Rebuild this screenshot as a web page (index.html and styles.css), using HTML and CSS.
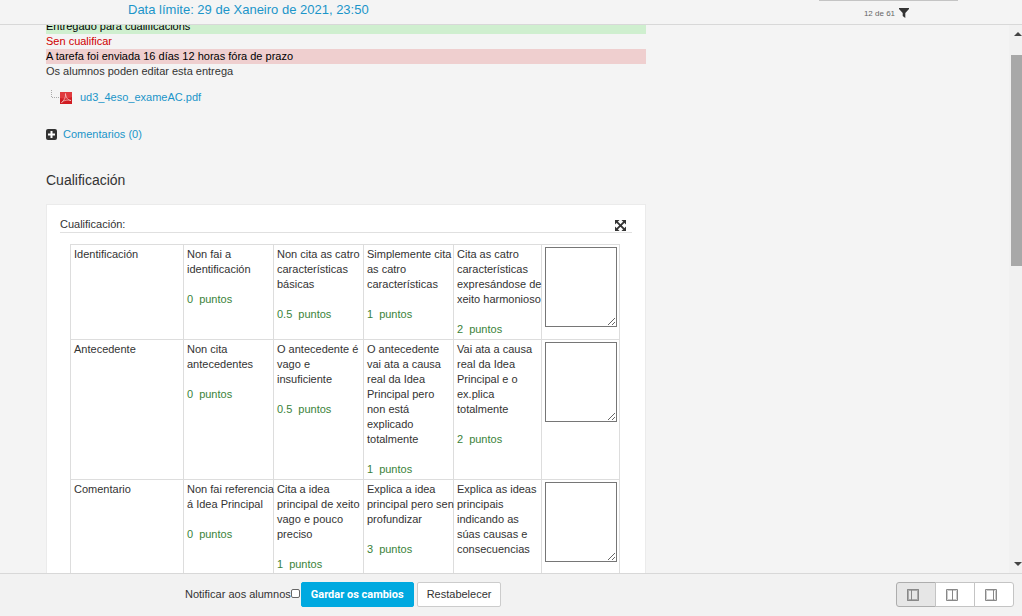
FILE: index.html
```html
<!DOCTYPE html>
<html lang="gl">
<head>
<meta charset="utf-8">
<title>Cualificación</title>
<link rel="stylesheet" href="styles.css">
</head>
<body>
<header class="topbar">
  <a class="due" href="#">Data límite: 29 de Xaneiro de 2021, 23:50</a>
  <div class="user-picker">
    <div class="picker-edge"></div>
    <div class="picker-count">
      <span>12 de 61</span>
      <svg class="filter-icon" viewBox="0 0 10 10"><path d="M0 0h10v1L6.300 5v5L3.700 8V5L0 1z" fill="#333"/></svg>
    </div>
  </div>
</header>
<div class="workspace">
  <main class="panel">
    <div class="content">
      <div class="status submitted">Entregado para cualificacións</div>
      <div class="status ungraded">Sen cualificar</div>
      <div class="status late">A tarefa foi enviada 16 días 12 horas fóra de prazo</div>
      <div class="status">Os alumnos poden editar esta entrega</div>
      <div class="file">
        <svg class="tree-line" viewBox="0 0 9 9"><path d="M.5 0v7.500H9" fill="none" stroke="#aaa" stroke-dasharray="1 1"/></svg>
        <svg class="pdf-icon" viewBox="0 0 12 12"><path d="M0 0h12v12H0z" fill="#d01c22"/><path d="M0 0h12v5Q6 8 0 6z" fill="#e03a3e"/><path d="M1.500 10.500C4 9 6 5 5.500 1.500C5.500 5 8 8.500 11 8.500C8 7.500 4 8 1.500 10.500z" fill="none" stroke="#f6c8c8" stroke-width=".7"/></svg>
        <a href="#">ud3_4eso_exameAC.pdf</a>
      </div>
      <div class="comments">
        <svg class="plus-icon" viewBox="0 0 11 11"><rect width="11" height="11" rx="2" fill="#333"/><path d="M5.500 2v7M2 5.500h7" stroke="#fff" stroke-width="2"/></svg>
        <a href="#">Comentarios (0)</a>
      </div>
      <h3 class="heading">Cualificación</h3>
      <section class="card">
        <div class="card-head">
          <span>Cualificación:</span>
          <button class="expand" type="button" aria-label="Expandir">
            <svg viewBox="0 0 12 12"><path d="M2 2l8 8M10 2l-8 8" stroke="#333" stroke-width="2"/><path d="M0 0h5L0 5zM12 0v5L7 0zM0 12V7l5 5zM12 12H7l5-5z" fill="#333"/></svg>
          </button>
        </div>
        <table class="rubric">
          <colgroup><col class="col-name"><col class="col-level"><col class="col-level"><col class="col-level"><col class="col-top"><col class="col-remark"></colgroup>
          <tbody>
            <tr>
              <th scope="row">Identificación</th>
              <td>Non fai a<br>identificación<div class="score"><span>0</span><span>puntos</span></div></td>
              <td>Non cita as catro<br>características<br>básicas<div class="score"><span>0.5</span><span>puntos</span></div></td>
              <td>Simplemente cita<br>as catro<br>características<div class="score"><span>1</span><span>puntos</span></div></td>
              <td>Cita as catro<br>características<br>expresándose de<br>xeito harmonioso<div class="score"><span>2</span><span>puntos</span></div></td>
              <td><textarea class="remark" aria-label="Identificación"></textarea></td>
            </tr>
            <tr>
              <th scope="row">Antecedente</th>
              <td>Non cita<br>antecedentes<div class="score"><span>0</span><span>puntos</span></div></td>
              <td>O antecedente é<br>vago e<br>insuficiente<div class="score"><span>0.5</span><span>puntos</span></div></td>
              <td>O antecedente<br>vai ata a causa<br>real da Idea<br>Principal pero<br>non está<br>explicado<br>totalmente<div class="score"><span>1</span><span>puntos</span></div></td>
              <td>Vai ata a causa<br>real da Idea<br>Principal e o<br>ex.plica<br>totalmente<div class="score"><span>2</span><span>puntos</span></div></td>
              <td><textarea class="remark" aria-label="Antecedente"></textarea></td>
            </tr>
            <tr class="tall">
              <th scope="row">Comentario</th>
              <td>Non fai referencia<br>á Idea Principal<div class="score"><span>0</span><span>puntos</span></div></td>
              <td>Cita a idea<br>principal de xeito<br>vago e pouco<br>preciso<div class="score"><span>1</span><span>puntos</span></div></td>
              <td>Explica a idea<br>principal pero sen<br>profundizar<div class="score"><span>3</span><span>puntos</span></div></td>
              <td>Explica as ideas<br>principais<br>indicando as<br>súas causas e<br>consecuencias</td>
              <td><textarea class="remark" aria-label="Comentario"></textarea></td>
            </tr>
          </tbody>
        </table>
      </section>
    </div>
  </main>
  <div class="scrollbar">
    <svg class="arrow" viewBox="0 0 8 4"><path d="M0 4l4-4 4 4z" fill="#444"/></svg>
    <div class="thumb"></div>
    <svg class="arrow" viewBox="0 0 8 4"><path d="M0 0h8L4 4z" fill="#444"/></svg>
  </div>
</div>
<footer class="actions">
  <form class="save">
    <label for="notify">Notificar aos alumnos</label>
    <input class="check" type="checkbox" id="notify">
    <button class="btn primary" type="button">Gardar os cambios</button>
    <button class="btn" type="button">Restabelecer</button>
  </form>
  <div class="layouts">
    <button class="layout active" type="button" aria-label="Panel esquerdo"><svg viewBox="0 0 12 12"><path d="M1 1h10v10H1z" fill="none" stroke="#aaa" stroke-width="2"/><path d="M.5.5h11v11H.5zM4.500 1v10" fill="none" stroke="#888"/></svg></button>
    <button class="layout" type="button" aria-label="Dous paneis"><svg viewBox="0 0 12 12"><path d="M.5.5h11v11H.5z" fill="none" stroke="#888"/><path d="M1.500 1.500h9v9h-9z" fill="none" stroke="#ccc"/><path d="M6.500 1v10" stroke="#888"/></svg></button>
    <button class="layout" type="button" aria-label="Panel dereito"><svg viewBox="0 0 12 12"><path d="M.5.5h11v11H.5z" fill="none" stroke="#888"/><path d="M1.500 1.500h9v9h-9z" fill="none" stroke="#ccc"/><path d="M8.500 1v10" stroke="#888"/></svg></button>
  </div>
</footer>
</body>
</html>
```

FILE: styles.css
```css
* { box-sizing: border-box; }

body {
  margin: 0;
  height: 100vh;
  display: flex;
  flex-direction: column;
  overflow: hidden;
  background: #f4f4f4;
  color: #333;
  font: 11px/15px "Liberation Sans", Arial, sans-serif;
}

a { color: #1b95c9; text-decoration: none; }
svg { display: block; flex: none; }
button, input, textarea { font: inherit; color: inherit; margin: 0; }

.topbar {
  flex: none;
  display: flex;
  justify-content: space-between;
  height: 25px;
  padding: 0 64px 0 128px;
  border-bottom: 1px solid #d8d8d8;
}
.due { font-size: 13px; line-height: 19px; }
.user-picker { width: 139px; }
.picker-edge {
  height: 1px;
  background: #c4c4c4;
}
.picker-count {
  display: flex;
  align-items: center;
  justify-content: center;
  gap: 4px;
  height: 24px;
  padding-right: 4px;
  font-size: 8px;
  color: #666;
}
.filter-icon { width: 10px; height: 10px; }

.workspace {
  flex: 1;
  min-height: 0;
  display: flex;
}
.panel { flex: 1; overflow: hidden; padding: 0 46px; }
.content { max-width: 600px; margin-top: -6px; }

.submitted { background: #cfefcf; color: #000; }
.ungraded { color: #d00000; }
.late { background: #efcfcf; color: #000; }

.file {
  display: flex;
  align-items: center;
  margin-top: 11px;
  padding-left: 5px;
}
.tree-line { width: 9px; height: 9px; margin-bottom: 6px; }
.pdf-icon { width: 12px; height: 12px; margin-right: 8px; }
.comments {
  display: flex;
  align-items: center;
  gap: 6px;
  margin-top: 22px;
}
.plus-icon { width: 11px; height: 11px; }
.heading {
  margin: 28px 0 14px;
  font-size: 14px;
  font-weight: 400;
  line-height: 20px;
}

.card {
  padding: 11px 13px;
  background: #fff;
  border: 1px solid #ebebeb;
}
.card-head {
  display: flex;
  justify-content: space-between;
  align-items: flex-start;
  height: 17px;
  padding-right: 5px;
  border-bottom: 1px solid #e0e0e0;
  line-height: 17px;
}
.expand {
  width: 12px;
  height: 12px;
  margin-top: 3px;
  padding: 0;
  border: 0;
  background: none;
}
.expand svg { width: 11px; height: 11px; }

.rubric {
  width: calc(100% - 22px);
  margin: 11px 10px 0;
  table-layout: fixed;
  border-collapse: collapse;
}
.col-name { width: 113px; }
.col-level { width: 90px; }
.col-remark { width: 78px; }
.rubric th, .rubric td {
  padding: 2px 0 2px 3px;
  border: 1px solid #ddd;
  font-weight: 400;
  text-align: left;
  vertical-align: top;
  white-space: nowrap;
}
.tall { height: 110px; }
.score {
  display: flex;
  gap: 6px;
  margin-top: 15px;
  color: #3a823a;
}
.remark {
  display: block;
  width: 72px;
  height: 80px;
  background: #fff;
  border: 1px solid #767676;
  resize: both;
}

.scrollbar {
  flex: none;
  display: flex;
  flex-direction: column;
  justify-content: space-between;
  width: 13px;
  padding: 7px 0 7px 2px;
  background: #f1f1f1;
}
.arrow { width: 8px; height: 4px; margin-left: 3px; }
.thumb {
  height: 211px;
  margin: 19px 0 auto;
  background: #a8a8a8;
}

.actions {
  flex: none;
  display: flex;
  align-items: flex-start;
  justify-content: space-between;
  padding: 8px 8px 9px 185px;
  border-top: 1px solid #d8d8d8;
  background: #f2f2f2;
}
.save { display: flex; align-items: center; }
.check {
  width: 9px;
  height: 9px;
  margin: 0 1px 3px 0;
  appearance: none;
  background: #fff;
  border: 1px solid #666;
  border-radius: 2px;
}
.check:checked { background: #00a9e0; }
.btn {
  height: 25px;
  padding: 0 9px;
  background: #fff;
  border: 1px solid #ccc;
  border-radius: 2px;
}
.btn.primary {
  margin-right: 3px;
  background: #00a9e0;
  border-color: #00a9e0;
  color: #fff;
  font-family: Roboto, Arial, sans-serif;
  font-weight: 700;
}
.layouts { display: flex; }
.layout {
  display: flex;
  align-items: center;
  justify-content: center;
  width: 40px;
  height: 25px;
  padding: 0 6px 0 0;
  background: #fff;
  border: 1px solid #c4c4c4;
  margin-left: -1px;
}
.layout:first-child { border-radius: 3px 0 0 3px; }
.layout:last-child { border-radius: 0 3px 3px 0; }
.layout.active { background: #e6e6e6; border-color: #adadad; }
.layout svg { width: 12px; height: 12px; }
```
